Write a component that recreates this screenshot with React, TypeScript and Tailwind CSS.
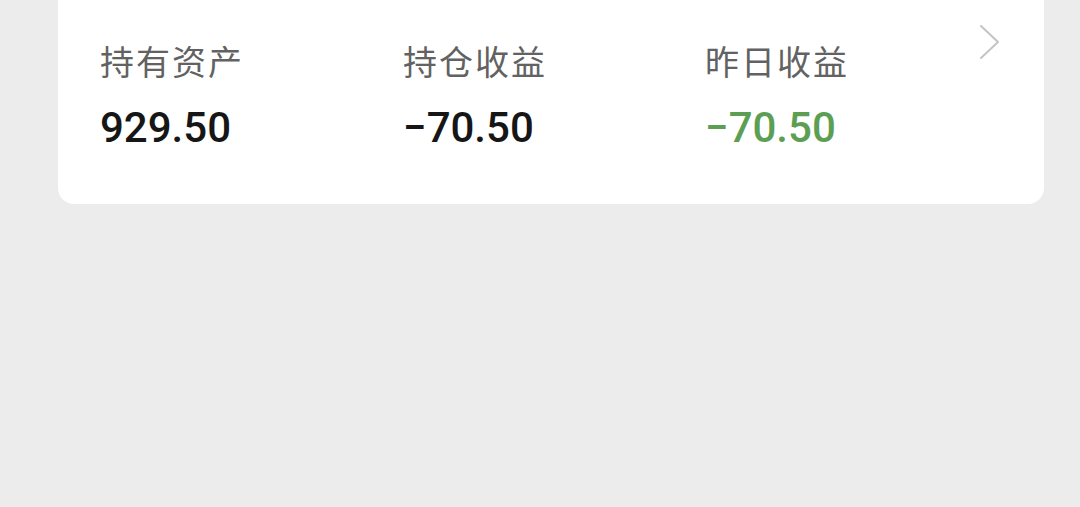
const stats = [
  { label: "持有资产", value: "929.50", tone: "text-[#161616]" },
  { label: "持仓收益", value: "−70.50", tone: "text-[#161616]" },
  { label: "昨日收益", value: "−70.50", tone: "text-[#5c9e52]" },
];

const ChevronRight = () => (
  <svg width="24" height="38" viewBox="0 0 24 38" fill="none">
    <path d="M3 3 L20 19 L3 35" stroke="#c4c4c4" strokeWidth="2" strokeLinecap="round" strokeLinejoin="round" />
  </svg>
);

export default function App() {
  return (
    <div className="min-h-[507px] w-full bg-[#ececec] pl-[58px] pr-[36px]">
      <div className="relative h-[204px] rounded-b-[16px] bg-white">
        <div className="grid grid-cols-[303px_302px_1fr] pl-[42px] pt-[40px]">
          {stats.map((s) => (
            <div key={s.label} className="flex flex-col">
              <span className="font-['Noto_Sans_CJK_SC',sans-serif] text-[34px] leading-[42px] tracking-[2px] text-[#626262]">
                {s.label}
              </span>
              <span
                className={`mt-[22px] font-['Roboto','Noto_Sans_CJK_SC',sans-serif] text-[42px] font-medium leading-[48px] ${s.tone}`}
              >
                {s.value}
              </span>
            </div>
          ))}
        </div>
        <div className="absolute right-[42px] top-[23px]">
          <ChevronRight />
        </div>
      </div>
    </div>
  );
}
